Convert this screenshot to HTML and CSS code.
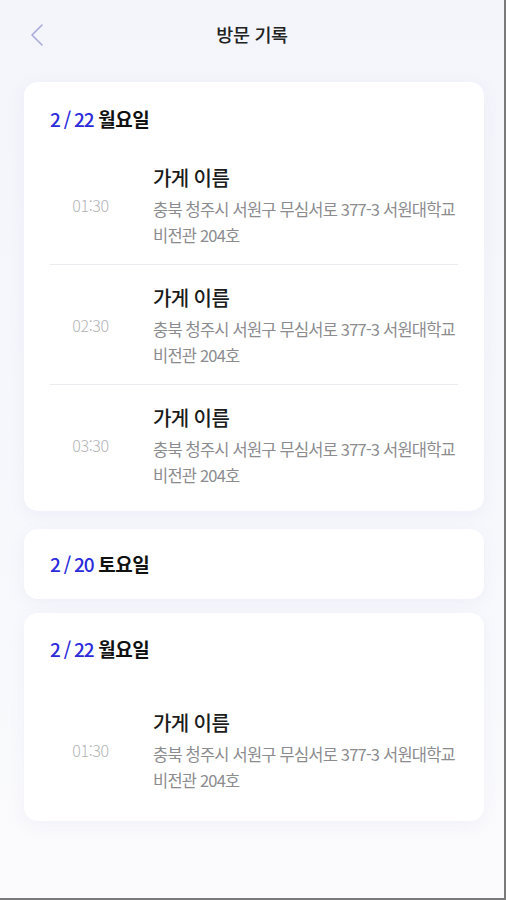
FILE: index.html
```html
<!DOCTYPE html>
<html lang="ko">
<head>
<meta charset="utf-8">
<link rel="stylesheet" href="styles.css">
</head>
<body>
<div class="screen">
  <header class="topbar">
    <svg class="back" width="20" height="24" viewBox="0 0 20 24"><path d="M12 2 L2 12 L12 22" fill="none" stroke="#a9aadb" stroke-width="1.6" stroke-linecap="round" stroke-linejoin="round"/></svg>
    <h1 class="title">방문 기록</h1>
  </header>
  <main class="list">
    <section class="card card-multi">
      <h2 class="date"><span class="num">2 / 22</span> 월요일</h2>
      <div class="item">
        <div class="time">01:30</div>
        <div class="info">
          <div class="name">가게 이름</div>
          <div class="addr">충북 청주시 서원구 무심서로 377-3 서원대학교<br>비전관 204호</div>
        </div>
      </div>
      <div class="item">
        <div class="time">02:30</div>
        <div class="info">
          <div class="name">가게 이름</div>
          <div class="addr">충북 청주시 서원구 무심서로 377-3 서원대학교<br>비전관 204호</div>
        </div>
      </div>
      <div class="item">
        <div class="time">03:30</div>
        <div class="info">
          <div class="name">가게 이름</div>
          <div class="addr">충북 청주시 서원구 무심서로 377-3 서원대학교<br>비전관 204호</div>
        </div>
      </div>
    </section>
    <section class="card card-closed">
      <h2 class="date"><span class="num">2 / 20</span> 토요일</h2>
    </section>
    <section class="card card-single">
      <h2 class="date"><span class="num">2 / 22</span> 월요일</h2>
      <div class="item">
        <div class="time">01:30</div>
        <div class="info">
          <div class="name">가게 이름</div>
          <div class="addr">충북 청주시 서원구 무심서로 377-3 서원대학교<br>비전관 204호</div>
        </div>
      </div>
    </section>
  </main>
</div>
</body>
</html>
```
FILE: styles.css
```css
html, body {
  margin: 0;
  padding: 0;
}
body {
  font-family: "Noto Sans CJK KR", "Noto Sans", sans-serif;
  background: #fff;
}
.screen {
  box-sizing: border-box;
  width: 506px;
  height: 900px;
  border-right: 2px solid #7a7a7a;
  border-bottom: 2px solid #7a7a7a;
  background: linear-gradient(180deg, #f4f5fb 0%, #f7f8fc 60%, #fbfbfd 100%);
  overflow: hidden;
}
.topbar {
  position: relative;
  height: 68px;
  display: flex;
  align-items: center;
  justify-content: center;
}
.back {
  position: absolute;
  left: 30px;
  top: 23px;
}
.title {
  margin: 0;
  font-size: 18.5px;
  font-weight: 500;
  color: #222;
  letter-spacing: -0.4px;
}
.list {
  display: flex;
  flex-direction: column;
  gap: 14px;
  padding: 14px 20px 0 24px;
}
.card {
  background: #fff;
  border-radius: 14px;
  box-shadow: 0 4px 16px rgba(110, 115, 200, 0.07);
  padding: 24px 26px 7px 26px;
}
.card-multi {
  margin-bottom: 4px;
}
.date {
  margin: 0 0 13px;
  font-size: 19px;
  line-height: 26px;
  font-weight: 700;
  color: #111;
  letter-spacing: -0.5px;
}
.date .num {
  color: #2b2bdc;
  font-weight: 500;
  letter-spacing: -1.2px;
}
.card-closed {
  padding: 22px 26px;
}
.card-closed .date {
  margin: 0;
}
.card-single {
  padding: 23px 26px 12px;
}
.card-single .item {
  padding-top: 35px;
}
.item {
  display: flex;
  align-items: center;
  padding: 20px 0 16px;
  border-bottom: 1px solid #ececf0;
}
.item:last-child {
  border-bottom: none;
}
.time {
  width: 81px;
  margin-right: 22px;
  padding-bottom: 3px;
  text-align: center;
  font-size: 16px;
  font-weight: 300;
  color: #b3b3b6;
  letter-spacing: -0.4px;
}
.info {
  flex: 1;
}
.name {
  font-size: 20px;
  line-height: 26px;
  font-weight: 500;
  color: #1c1c1c;
  letter-spacing: -0.6px;
  margin-bottom: 5px;
}
.addr {
  font-size: 16.5px;
  line-height: 26px;
  color: #8c8c8f;
  letter-spacing: -0.8px;
  white-space: nowrap;
}
```
